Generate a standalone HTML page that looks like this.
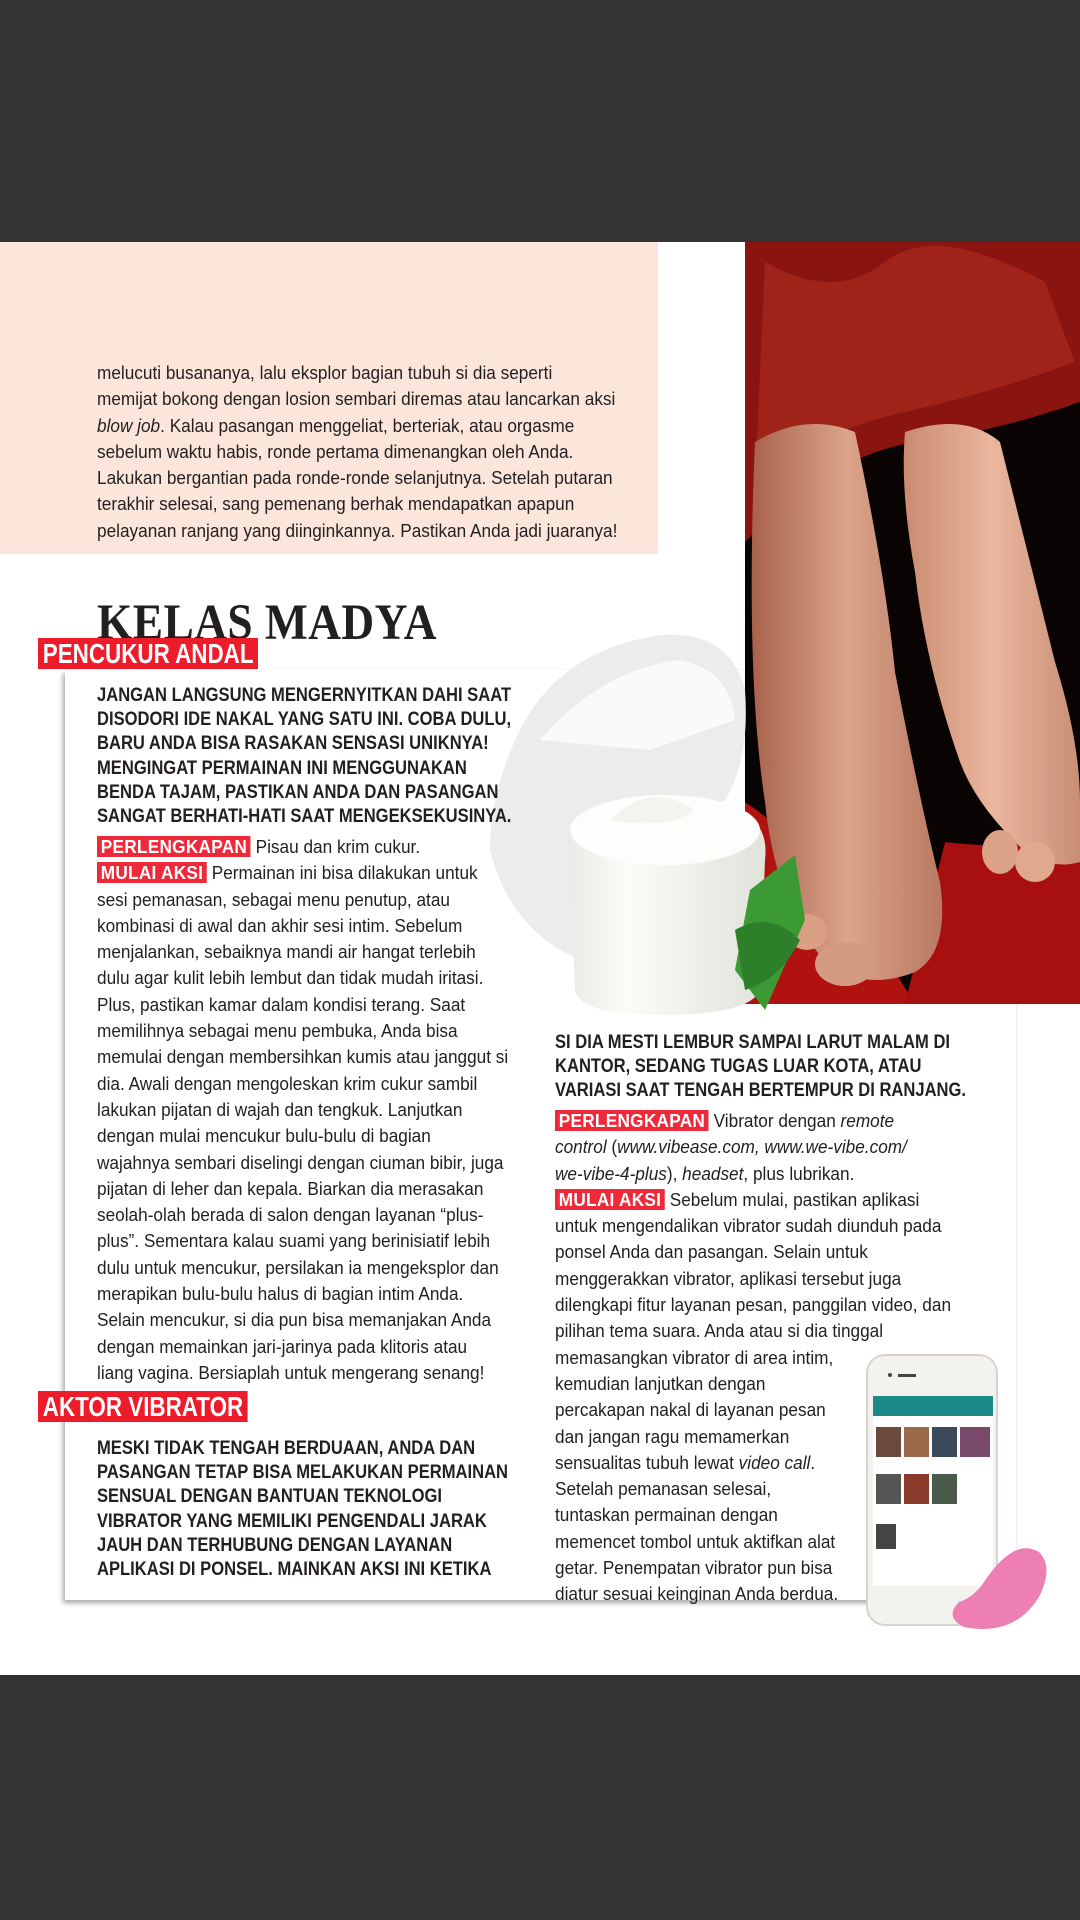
<!DOCTYPE html>
<html><head><meta charset="utf-8"><style>
*{margin:0;padding:0;box-sizing:border-box}
body{width:1080px;height:1920px;background:#333;position:relative;overflow:hidden;font-family:"Liberation Sans Narrow","Liberation Sans",sans-serif;color:#231f20}
.page{position:absolute;left:0;top:242px;width:1080px;height:1433px;background:#fff}
.pink{position:absolute;left:0;top:242px;width:658px;height:312px;background:#fce6dc}
.t{position:absolute;font-size:18.5px;line-height:26.3px;white-space:nowrap;transform:scaleX(.93);transform-origin:left top}
.b{position:absolute;font-weight:bold;font-size:19.5px;line-height:24.2px;white-space:nowrap;transform:scaleX(.85);transform-origin:left top}
.tag{background:#ee2a3a;color:#fff;font-weight:bold;padding:0 4px;letter-spacing:0.3px}
.rt{position:absolute;background:#ee1c2b;color:#fff;font-weight:bold;font-size:28px;line-height:31px;padding:0 6px;white-space:nowrap;transform:scaleX(.8);transform-origin:left top}
.card{position:absolute;left:65px;top:670px;width:951px;height:930px;background:#fff;box-shadow:-2px 3px 5px rgba(0,0,0,.35)}
h1{position:absolute;left:97px;top:594px;font-family:"Liberation Serif",serif;font-weight:bold;font-size:51px;letter-spacing:0.5px;color:#231f20;transform:scaleX(.89);transform-origin:left}
</style></head><body>
<div class="page"></div>
<div class="pink"></div>
<div class="t" style="left:97px;top:360px">melucuti busananya, lalu eksplor bagian tubuh si dia seperti<br>memijat bokong dengan losion sembari diremas atau lancarkan aksi<br><i>blow job</i>. Kalau pasangan menggeliat, berteriak, atau orgasme<br>sebelum waktu habis, ronde pertama dimenangkan oleh Anda.<br>Lakukan bergantian pada ronde-ronde selanjutnya. Setelah putaran<br>terakhir selesai, sang pemenang berhak mendapatkan apapun<br>pelayanan ranjang yang diinginkannya. Pastikan Anda jadi juaranya!</div>

<div class="card"></div>

<svg style="position:absolute;left:745px;top:242px" width="335" height="762" viewBox="0 0 335 762">
<defs>
<linearGradient id="sk" x1="0" y1="0" x2="1" y2="0"><stop offset="0" stop-color="#a8624c"/><stop offset=".5" stop-color="#dca48a"/><stop offset="1" stop-color="#b87a62"/></linearGradient>
<linearGradient id="sk2" x1="0" y1="0" x2="1" y2="0"><stop offset="0" stop-color="#c88b70"/><stop offset=".5" stop-color="#eab79e"/><stop offset="1" stop-color="#c98e76"/></linearGradient>
</defs>
<rect width="335" height="762" fill="#0a0303"/>
<path d="M0 0H335V160Q250 190 170 200Q80 215 0 300Z" fill="#8a140f"/>
<path d="M20 20Q90 60 140 20T300 40L330 120Q250 150 160 170Q70 190 10 240Z" fill="#a82a1e" opacity=".7"/>
<path d="M0 560Q60 600 120 680Q150 730 170 762H0Z" fill="#b0120f"/>
<path d="M200 600Q280 610 335 590V762H160Z" fill="#a8100f"/>
<path d="M10 200Q60 170 110 190Q140 330 150 430Q175 560 195 640Q205 710 170 730Q120 750 80 720Q30 660 20 560Q0 430 10 200Z" fill="url(#sk)"/>
<path d="M160 190Q220 170 255 200Q280 300 310 420Q335 500 335 560V620Q300 630 270 600Q230 560 215 520Q180 420 170 330Q155 250 160 190Z" fill="url(#sk2)"/>
<ellipse cx="100" cy="722" rx="30" ry="22" fill="#d49a82"/>
<ellipse cx="62" cy="690" rx="20" ry="18" fill="#d9a086"/>
<ellipse cx="35" cy="650" rx="15" ry="16" fill="#d09880"/>
<ellipse cx="255" cy="610" rx="18" ry="22" fill="#dca287"/>
<ellipse cx="290" cy="620" rx="20" ry="20" fill="#e0a98e"/>
</svg>

<h1>KELAS MADYA</h1>

<svg style="position:absolute;left:480px;top:630px" width="360" height="390" viewBox="0 0 360 390">
<defs><linearGradient id="jar" x1="0" y1="0" x2="1" y2="0"><stop offset="0" stop-color="#e8ece4"/><stop offset=".3" stop-color="#fbfcf8"/><stop offset="1" stop-color="#dfe3da"/></linearGradient></defs>
<path d="M40 100Q80 20 180 5Q250 0 265 60Q270 130 245 170L100 330Q30 300 10 220Q10 160 40 100Z" fill="#ececec"/>
<path d="M60 110Q120 40 200 30Q250 40 255 90L170 120Z" fill="#fafafa"/>
<path d="M90 230Q80 190 120 175Q190 160 250 175Q290 190 285 230L280 360Q270 385 180 385Q100 385 95 360Z" fill="url(#jar)"/>
<ellipse cx="185" cy="200" rx="95" ry="35" fill="#fdfdfb"/>
<path d="M130 190Q170 150 215 180Q190 200 130 190Z" fill="#f4f4ee"/>
<path d="M270 260L315 225L325 290L285 380L255 340Z" fill="#3c9a34"/>
<path d="M255 300Q290 280 320 310Q300 350 265 360Z" fill="#2d7f2a"/>
</svg>

<div class="rt" style="left:38px;top:638px">PENCUKUR ANDAL</div>
<div class="b" style="left:97px;top:683px">JANGAN LANGSUNG MENGERNYITKAN DAHI SAAT<br>DISODORI IDE NAKAL YANG SATU INI. COBA DULU,<br>BARU ANDA BISA RASAKAN SENSASI UNIKNYA!<br>MENGINGAT PERMAINAN INI MENGGUNAKAN<br>BENDA TAJAM, PASTIKAN ANDA DAN PASANGAN<br>SANGAT BERHATI-HATI SAAT MENGEKSEKUSINYA.</div>

<div class="t" style="left:97px;top:834px"><span class="tag">PERLENGKAPAN</span> Pisau dan krim cukur.<br><span class="tag">MULAI AKSI</span> Permainan ini bisa dilakukan untuk<br>sesi pemanasan, sebagai menu penutup, atau<br>kombinasi di awal dan akhir sesi intim. Sebelum<br>menjalankan, sebaiknya mandi air hangat terlebih<br>dulu agar kulit lebih lembut dan tidak mudah iritasi.<br>Plus, pastikan kamar dalam kondisi terang. Saat<br>memilihnya sebagai menu pembuka, Anda bisa<br>memulai dengan membersihkan kumis atau janggut si<br>dia. Awali dengan mengoleskan krim cukur sambil<br>lakukan pijatan di wajah dan tengkuk. Lanjutkan<br>dengan mulai mencukur bulu-bulu di bagian<br>wajahnya sembari diselingi dengan ciuman bibir, juga<br>pijatan di leher dan kepala. Biarkan dia merasakan<br>seolah-olah berada di salon dengan layanan “plus-<br>plus”. Sementara kalau suami yang berinisiatif lebih<br>dulu untuk mencukur, persilakan ia mengeksplor dan<br>merapikan bulu-bulu halus di bagian intim Anda.<br>Selain mencukur, si dia pun bisa memanjakan Anda<br>dengan memainkan jari-jarinya pada klitoris atau<br>liang vagina. Bersiaplah untuk mengerang senang!</div>

<div class="rt" style="left:38px;top:1391px">AKTOR VIBRATOR</div>
<div class="b" style="left:97px;top:1436px">MESKI TIDAK TENGAH BERDUAAN, ANDA DAN<br>PASANGAN TETAP BISA MELAKUKAN PERMAINAN<br>SENSUAL DENGAN BANTUAN TEKNOLOGI<br>VIBRATOR YANG MEMILIKI PENGENDALI JARAK<br>JAUH DAN TERHUBUNG DENGAN LAYANAN<br>APLIKASI DI PONSEL. MAINKAN AKSI INI KETIKA</div>

<div class="b" style="left:555px;top:1030px">SI DIA MESTI LEMBUR SAMPAI LARUT MALAM DI<br>KANTOR, SEDANG TUGAS LUAR KOTA, ATAU<br>VARIASI SAAT TENGAH BERTEMPUR DI RANJANG.</div>
<div class="t" style="left:555px;top:1108px"><span class="tag">PERLENGKAPAN</span> Vibrator dengan <i>remote</i><br><i>control</i> (<i>www.vibease.com, www.we-vibe.com/</i><br><i>we-vibe-4-plus</i>), <i>headset</i>, plus lubrikan.<br><span class="tag">MULAI AKSI</span> Sebelum mulai, pastikan aplikasi<br>untuk mengendalikan vibrator sudah diunduh pada<br>ponsel Anda dan pasangan. Selain untuk<br>menggerakkan vibrator, aplikasi tersebut juga<br>dilengkapi fitur layanan pesan, panggilan video, dan<br>pilihan tema suara. Anda atau si dia tinggal<br>memasangkan vibrator di area intim,<br>kemudian lanjutkan dengan<br>percakapan nakal di layanan pesan<br>dan jangan ragu memamerkan<br>sensualitas tubuh lewat <i>video call</i>.<br>Setelah pemanasan selesai,<br>tuntaskan permainan dengan<br>memencet tombol untuk aktifkan alat<br>getar. Penempatan vibrator pun bisa<br>diatur sesuai keinginan Anda berdua.</div>

<svg style="position:absolute;left:864px;top:1352px" width="190" height="280" viewBox="0 0 190 280">
<rect x="3" y="3" width="130" height="270" rx="18" fill="#f4f2ee" stroke="#d8d4cc" stroke-width="2"/>
<rect x="34" y="22" width="18" height="3" fill="#444"/><circle cx="26" cy="23" r="2" fill="#444"/>
<rect x="9" y="44" width="120" height="190" fill="#fff"/>
<rect x="9" y="44" width="120" height="20" fill="#1d8a8a"/>
<g fill="#6a4a3a"><rect x="12" y="75" width="25" height="30"/><rect x="40" y="75" width="25" height="30" fill="#9a6a4a"/><rect x="68" y="75" width="25" height="30" fill="#3a4a5a"/><rect x="96" y="75" width="30" height="30" fill="#7a4a6a"/>
<rect x="12" y="122" width="25" height="30" fill="#555"/><rect x="40" y="122" width="25" height="30" fill="#8a3a2a"/><rect x="68" y="122" width="25" height="30" fill="#4a5a4a"/><rect x="12" y="172" width="20" height="25" fill="#444"/></g>
<path d="M120 230Q150 185 175 200Q190 215 175 245Q150 285 100 275Q80 265 95 250Q110 245 120 230Z" fill="#ee7fb3"/>
</svg>
</body></html>
